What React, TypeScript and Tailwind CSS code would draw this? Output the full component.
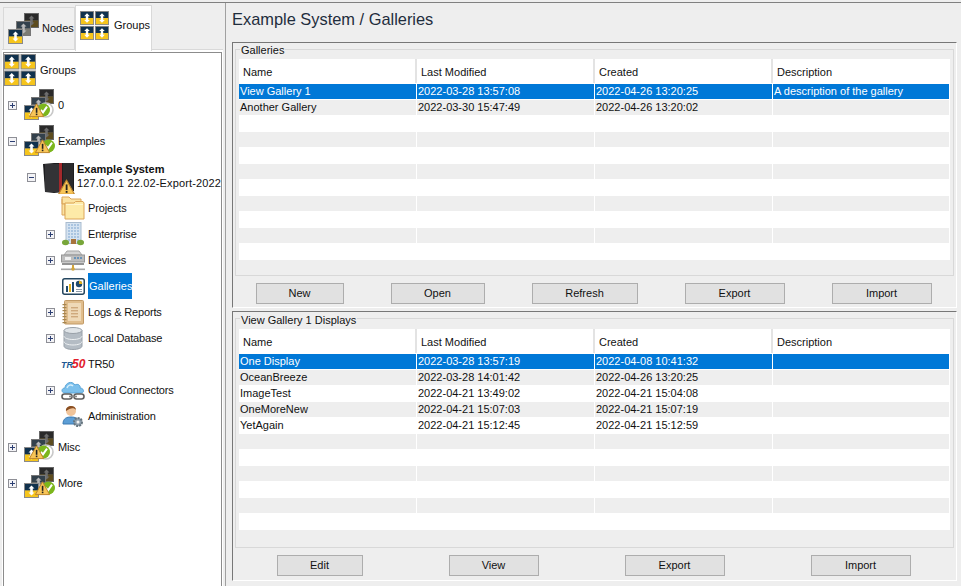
import React from "react";

function Tile({ x, y, tone = 0 }: { x: number; y: number; tone?: number }) {
  const top = ["#10314d", "#33414c", "#2a2a2a"][tone];
  const bottom = ["#f6c51c", "#7c7c74", "#5d4c1e"][tone];
  const arrow = ["#ffffff", "#b9b9b9", "#6d6d6d"][tone];
  const frame = ["#8a8a8a", "#777777", "#666666"][tone];
  return (
    <g transform={`translate(${x} ${y})`}>
      <rect width="15" height="15" fill={frame} />
      <rect x="1" y="1" width="13" height="6.5" fill={top} />
      <rect x="1" y="7.5" width="13" height="6.5" fill={bottom} />
      <path d="M7.5 2.5 L10.5 5.5 H8.8 V9.5 H10.5 L7.5 12.5 L4.5 9.5 H6.2 V5.5 H4.5 Z" fill={arrow} />
    </g>
  );
}

function Warn({ x, y, s = 15 }: { x: number; y: number; s?: number }) {
  return (
    <g transform={`translate(${x} ${y}) scale(${s / 15})`}>
      <path d="M7.5 .8 L14.6 13.6 H.4 Z" fill="#f8c557" stroke="#bd852d" strokeLinejoin="round" />
      <rect x="6.8" y="4.8" width="1.6" height="5" fill="#222" />
      <rect x="6.8" y="10.6" width="1.6" height="1.6" fill="#222" />
    </g>
  );
}

function Check({ x, y }: { x: number; y: number }) {
  return (
    <g transform={`translate(${x} ${y})`}>
      <circle cx="6.5" cy="7" r="6.5" fill="#7cb61c" />
      <path d="M3.8 7 L6 9.4 L10 3.6" fill="none" stroke="#fff" strokeWidth="2" />
    </g>
  );
}

function GroupsIcon({ size = 32 }: { size?: number }) {
  return (
    <svg width={size} height={size} viewBox="0 0 31 31" className="shrink-0">
      <Tile x={0} y={0} />
      <Tile x={16} y={0} />
      <Tile x={0} y={16} />
      <Tile x={16} y={16} />
    </svg>
  );
}

function NodesIcon() {
  return (
    <svg width="31" height="31" viewBox="0 0 31 31" className="shrink-0">
      <Tile x={16} y={0} tone={2} />
      <Tile x={8} y={8} tone={1} />
      <Tile x={0} y={16} />
    </svg>
  );
}

function StatusIcon({ variant }: { variant: "a" | "b" }) {
  return (
    <svg width="31" height="32" viewBox="0 0 31 32" className="shrink-0 overflow-visible">
      <Tile x={15} y={0} tone={2} />
      <Tile x={7} y={8} tone={1} />
      <Tile x={0} y={16} />
      {variant === "a" ? (
        <>
          <circle cx="22" cy="21" r="7" fill="none" stroke="#c8c8c8" strokeWidth="1.6" />
          <Check x={13} y={14} />
          <Warn x={5} y={14} />
        </>
      ) : (
        <>
          <Check x={18} y={14} />
          <Warn x={11} y={14} />
        </>
      )}
    </svg>
  );
}

function SystemIcon() {
  return (
    <svg width="33" height="33" viewBox="0 0 33 33" className="shrink-0">
      <path d="M1 3 L12 2 L32 2 V30 L12 32 L3 31 Z" fill="#1d1d1f" />
      <rect x="3" y="3" width="14" height="28" fill="#333336" />
      <rect x="17" y="2" width="3" height="29" fill="#a3282b" />
      <rect x="21" y="2" width="10" height="27" fill="#2a2a2c" />
      <Warn x={16} y={18} s={17} />
    </svg>
  );
}

function ProjectsIcon() {
  return (
    <svg width="24" height="24" viewBox="0 0 24 24" className="shrink-0">
      <path d="M1 3 V1 H8 L10 3 H20 V8 H1 Z" fill="#fbe3a2" stroke="#dca65a" />
      <path d="M1 3 V19 H4 V8 H1" fill="#fbe3a2" stroke="#dca65a" />
      <path d="M4 7 H13 L14.5 5.5 H22 L23 7 V23 H4 Z" fill="#fdeaa8" stroke="#dca65a" />
      <path d="M5 8.5 H22" stroke="#fff6d2" />
    </svg>
  );
}

function EnterpriseIcon() {
  const cells = [];
  for (let r = 0; r < 6; r++) {
    for (let c = 0; c < 4; c++) {
      cells.push(<rect key={`${r}-${c}`} x={6 + c * 3} y={2 + r * 3} width="2" height="2" fill="#a9c4e0" />);
    }
  }
  return (
    <svg width="22" height="24" viewBox="0 0 22 24" className="shrink-0">
      <rect x="4" y="0.5" width="15" height="21" fill="#d5e3f1" stroke="#a9bccf" />
      {cells}
      <rect x="9" y="17" width="5" height="5" fill="#a8743c" />
      <ellipse cx="3.5" cy="20.5" rx="3.5" ry="2.8" fill="#78a63a" />
      <ellipse cx="18.5" cy="20.5" rx="3.5" ry="2.8" fill="#78a63a" />
    </svg>
  );
}

function DevicesIcon() {
  return (
    <svg width="24" height="21" viewBox="0 0 24 21" className="shrink-0">
      <path d="M3 5 L6 1 H18 L21 5 Z" fill="#d4d4d4" stroke="#a5a5a5" />
      <rect x="0.5" y="5" width="23" height="7" fill="#bdbdbd" stroke="#969696" />
      <rect x="4" y="7" width="6" height="3" fill="#f0f0f0" />
      <rect x="13" y="7" width="2" height="2" fill="#6a93b8" />
      <rect x="16" y="7" width="2" height="2" fill="#6a93b8" />
      <rect x="19" y="7" width="2" height="2" fill="#6a93b8" />
      <rect x="1" y="13" width="22" height="2" fill="#949494" />
      <rect x="11" y="15" width="2" height="4" fill="#d3a53b" />
      <rect x="0" y="18.5" width="24" height="1.6" fill="#a8a8a8" />
      <circle cx="12" cy="19" r="1.8" fill="#d3a53b" />
    </svg>
  );
}

function GalleriesIcon() {
  return (
    <svg width="23" height="17" viewBox="0 0 23 17" className="shrink-0">
      <rect x="0.75" y="0.75" width="21.5" height="15.5" rx="2" fill="#fff" stroke="#24465f" strokeWidth="1.5" />
      <rect x="4" y="8" width="2" height="6" fill="#1f4a6e" />
      <rect x="7" y="6" width="2" height="8" fill="#e2b21f" />
      <rect x="10" y="4" width="2" height="10" fill="#1f4a6e" />
      <circle cx="17" cy="6" r="3.2" fill="#1f4a6e" />
      <path d="M17 6 V2.8 A3.2 3.2 0 0 1 20.2 6 Z" fill="#e2b21f" />
      <rect x="14" y="11" width="6" height="1" fill="#8a9aa8" />
      <rect x="14" y="13" width="6" height="1" fill="#8a9aa8" />
    </svg>
  );
}

function LogsIcon() {
  return (
    <svg width="22" height="25" viewBox="0 0 22 25" className="shrink-0">
      <rect x="2.5" y="0.5" width="19" height="23.5" rx="1" fill="#e0bd8c" stroke="#c29a66" />
      <rect x="6" y="3" width="13" height="18" fill="#efd9b7" />
      {[4, 7, 10, 13, 16, 19, 22].map((y) => (
        <rect key={y} x="0.5" y={y} width="4" height="1.2" fill="#a5854f" />
      ))}
      {[7, 10, 13, 16].map((y) => (
        <rect key={y} x="9" y={y} width="7" height="1.4" fill="#cfa97c" />
      ))}
    </svg>
  );
}

function DatabaseIcon() {
  return (
    <svg width="20" height="23" viewBox="0 0 20 23" className="shrink-0">
      <path d="M1 3.5 V19 C1 21 5 22.5 10 22.5 S19 21 19 19 V3.5 Z" fill="#b4bcc4" stroke="#98a0a8" />
      <ellipse cx="10" cy="3.5" rx="9" ry="3" fill="#dfe4e8" stroke="#98a0a8" />
      <path d="M1 9 C1 11 5 12.5 10 12.5 S19 11 19 9" fill="none" stroke="#eef1f3" />
      <path d="M1 14.5 C1 16.5 5 18 10 18 S19 16.5 19 14.5" fill="none" stroke="#eef1f3" />
    </svg>
  );
}

function CloudIcon() {
  return (
    <svg width="24" height="21" viewBox="0 0 24 21" className="shrink-0">
      <path d="M4 13 C0 13 0 8 4 8 C4 3 11 0 14 5 C17 3 20 6 19 8 C23 8 24 13 20 13 Z" fill="#7cc0ec" stroke="#5ba5d8" />
      <path d="M6 8 C7 5 10 4 12 6" fill="none" stroke="#d6effc" strokeWidth="1.5" />
      <rect x="1" y="14" width="10" height="5" rx="2.5" fill="none" stroke="#5e5e5e" strokeWidth="1.6" />
      <rect x="13" y="14" width="10" height="5" rx="2.5" fill="none" stroke="#5e5e5e" strokeWidth="1.6" />
      <rect x="8" y="15.7" width="8" height="1.6" fill="#8a8a8a" />
    </svg>
  );
}

function AdminIcon() {
  return (
    <svg width="22" height="24" viewBox="0 0 22 24" className="shrink-0">
      <path d="M1 20 C1 14 5 13 9 13 C13 13 17 14 17 20 Z" fill="#5c9ed6" stroke="#3d7bb2" />
      <circle cx="9" cy="7" r="5" fill="#f0c49a" />
      <path d="M4 7 C3 1 14 0 14 6 C12 3 8 4 4 7 Z" fill="#8a4f22" />
      <circle cx="16" cy="18" r="4" fill="#8fa0ae" stroke="#66757f" strokeWidth="2" strokeDasharray="2 1" />
      <circle cx="16" cy="18" r="1.5" fill="#f2f2f2" />
    </svg>
  );
}

function Tr50Icon() {
  return (
    <svg width="24" height="12" viewBox="0 0 24 12" className="shrink-0 overflow-visible">
      <text x="0" y="10" fontFamily="Liberation Sans, sans-serif" fontStyle="italic" fontWeight="700" fontSize="9" fill="#1d5a94">TR</text>
      <text x="11" y="10" fontFamily="Liberation Sans, sans-serif" fontStyle="italic" fontWeight="700" fontSize="12" fill="#e2202c">50</text>
    </svg>
  );
}

function Expander({ open }: { open?: boolean }) {
  return (
    <svg width="9" height="9" viewBox="0 0 9 9" className="shrink-0">
      <rect x="0.5" y="0.5" width="8" height="8" fill="#f3f3f6" stroke="#8e8f96" />
      <rect x="2" y="4" width="5" height="1" fill="#2c3f73" />
      {!open && <rect x="4" y="2" width="1" height="5" fill="#2c3f73" />}
    </svg>
  );
}

function Child({ icon, label, exp, selected }: { icon: React.ReactNode; label: string; exp?: boolean; selected?: boolean }) {
  return (
    <div className="flex h-[26px] items-center pl-[42px]">
      <div className="flex w-[9px] shrink-0">{exp && <Expander />}</div>
      <div className="ml-[6px] flex w-[24px] shrink-0 justify-center">{icon}</div>
      <div className={selected ? "ml-[3px] flex h-[26px] w-[44px] items-center bg-[#0078d7] pl-px text-white" : "ml-[3px] tracking-[-0.15px]"}>{label}</div>
    </div>
  );
}

function TopRow({ variant, label, open }: { variant: "a" | "b"; label: string; open?: boolean }) {
  return (
    <div className="flex h-[36px] items-center pl-[4px]">
      <Expander open={open} />
      <div className="ml-[7px] flex"><StatusIcon variant={variant} /></div>
      <div className="ml-[3px] tracking-[-0.15px]">{label}</div>
    </div>
  );
}

function Tree() {
  return (
    <div className="mx-px mt-[2px] h-[534px] overflow-hidden border border-[#8c8c8c] border-b-0 bg-white text-[#111] whitespace-nowrap">
      <div className="flex h-[34px] items-center">
        <GroupsIcon />
        <div className="ml-[4px]">Groups</div>
      </div>
      <TopRow variant="a" label="0" />
      <TopRow variant="b" label="Examples" open />
      <div className="flex h-[36px] items-center pl-[23px]">
        <Expander open />
        <div className="ml-[6px] flex"><SystemIcon /></div>
        <div className="ml-[2px] pb-[2px] leading-[14px]">
          <div className="font-['Noto_Sans'] font-bold">Example System</div>
          <div className="tracking-[0.15px]">127.0.0.1 22.02-Export-2022</div>
        </div>
      </div>
      <Child icon={<ProjectsIcon />} label="Projects" />
      <Child icon={<EnterpriseIcon />} label="Enterprise" exp />
      <Child icon={<DevicesIcon />} label="Devices" exp />
      <Child icon={<GalleriesIcon />} label="Galleries" selected />
      <Child icon={<LogsIcon />} label="Logs & Reports" exp />
      <Child icon={<DatabaseIcon />} label="Local Database" exp />
      <Child icon={<Tr50Icon />} label="TR50" />
      <Child icon={<CloudIcon />} label="Cloud Connectors" exp />
      <Child icon={<AdminIcon />} label="Administration" />
      <TopRow variant="a" label="Misc" />
      <TopRow variant="b" label="More" />
    </div>
  );
}

const COLS = ["w-[178px]", "w-[178px]", "w-[178px]", "w-[177px]"];
const HEADERS = ["Name", "Last Modified", "Created", "Description"];

function Table({ rows }: { rows: string[][] }) {
  const all = Array.from({ length: 11 }, (_, i) => rows[i] ?? ["", "", "", ""]);
  return (
    <div className="w-[711px] bg-white">
      <div className="flex h-[25px]">
        {HEADERS.map((h, i) => (
          <div key={h} className={`${COLS[i]} flex h-[24px] items-center pt-[2px] pl-[4px] ${i < 3 ? "border-r-2 border-[#e3e3e3]" : ""}`}>
            {h}
          </div>
        ))}
      </div>
      {all.map((r, i) => (
        <div
          key={i}
          className={`flex h-[16px] border-b border-white ${i === 0 ? "bg-[#0078d7] text-white" : i % 2 === 1 ? "bg-[#eeeeee]" : "bg-white"}`}
        >
          {r.map((c, j) => (
            <div key={j} className={`${COLS[j]} flex items-center overflow-hidden border-r border-white pl-px whitespace-nowrap`}>
              {c}
            </div>
          ))}
        </div>
      ))}
    </div>
  );
}

function Btn({ label, w }: { label: string; w: string }) {
  return (
    <div className={`${w} flex h-[21px] items-center justify-center border border-[#adadad] bg-[#e1e1e1]`}>{label}</div>
  );
}

function Panel({
  title,
  rows,
  panelH,
  boxH,
  legend,
  tablePad,
  gap,
  buttons,
}: {
  title: string;
  rows: string[][];
  panelH: string;
  boxH: string;
  legend: string;
  tablePad: string;
  gap: string;
  buttons: [string, string][];
}) {
  return (
    <div className={`${panelH} w-[725px] border-t border-l border-t-[#777777] border-l-[#777777] border-r border-b border-r-white border-b-white pt-[6px] pl-[2px]`}>
      <div className={`${boxH} w-[719px] border border-[#d8d8d8] pl-[3px]`}>
        <div className={`${legend} ml-[1px] w-fit bg-[#eeeeee] px-[1px] leading-[15px]`}>{title}</div>
        <div className={tablePad}>
          <Table rows={rows} />
        </div>
      </div>
      <div className={`mt-[7px] flex w-[717px] justify-center ${gap}`}>
        {buttons.map(([l, w]) => (
          <Btn key={l} label={l} w={w} />
        ))}
      </div>
    </div>
  );
}

export default function App() {
  return (
    <div
      className="flex h-[586px] w-[961px] flex-col overflow-hidden bg-[#eeeeee] text-[11px] text-[#111]"
      style={{ fontFamily: '"Liberation Sans", sans-serif' }}
    >
      <div className="h-[2px] shrink-0" />
      <div className="flex flex-1 border-t border-[#808080]">
        <div className="w-[225px] shrink-0">
          <div className="flex h-[46px] items-end pl-[3px]">
            <div className="relative -mb-px flex h-[43px] w-[72px] items-center border border-[#d9d9d9] bg-[#f0f0f0] pl-[4px]">
              <NodesIcon />
              <div className="ml-[3px]">Nodes</div>
            </div>
            <div className="relative z-10 -mb-[2px] flex h-[46px] w-[77px] items-start border border-b-0 border-[#d9d9d9] bg-white pt-[5px] pl-[4px]">
              <div className="flex items-center">
                <GroupsIcon size={29} />
                <div className="ml-[5px]">Groups</div>
              </div>
            </div>
          </div>
          <div className="ml-[2px] h-[537px] w-[221px] border-t border-[#d9d9d9] bg-white">
            <Tree />
          </div>
        </div>
        <div className="flex-1 border-l border-[#a0a0a0] pl-[6px]">
          <div className="flex h-[39px] items-center pb-[7px] text-[16.4px] text-[#1f2d3d]">Example System / Galleries</div>
          <Panel
            title="Galleries"
            rows={[
              ["View Gallery 1", "2022-03-28 13:57:08", "2022-04-26 13:20:25", "A description of the gallery"],
              ["Another Gallery", "2022-03-30 15:47:49", "2022-04-26 13:20:02", ""],
            ]}
            panelH="h-[266px]"
            boxH="h-[227px]"
            legend="-mt-[7px]"
            tablePad="pt-[1px]"
            gap="gap-[47px]"
            buttons={[
              ["New", "w-[88px]"],
              ["Open", "w-[94px]"],
              ["Refresh", "w-[106px]"],
              ["Export", "w-[100px]"],
              ["Import", "w-[100px]"],
            ]}
          />
          <div className="h-[3px]" />
          <Panel
            title="View Gallery 1 Displays"
            rows={[
              ["One Display", "2022-03-28 13:57:19", "2022-04-08 10:41:32", ""],
              ["OceanBreeze", "2022-03-28 14:01:42", "2022-04-26 13:20:25", ""],
              ["ImageTest", "2022-04-21 13:49:02", "2022-04-21 15:04:08", ""],
              ["OneMoreNew", "2022-04-21 15:07:03", "2022-04-21 15:07:19", ""],
              ["YetAgain", "2022-04-21 15:12:45", "2022-04-21 15:12:59", ""],
            ]}
            panelH="h-[270px]"
            boxH="h-[230px]"
            legend="-mt-[6px]"
            tablePad="pt-[1px]"
            gap="gap-[86px]"
            buttons={[
              ["Edit", "w-[86px]"],
              ["View", "w-[90px]"],
              ["Export", "w-[100px]"],
              ["Import", "w-[100px]"],
            ]}
          />
        </div>
      </div>
    </div>
  );
}
